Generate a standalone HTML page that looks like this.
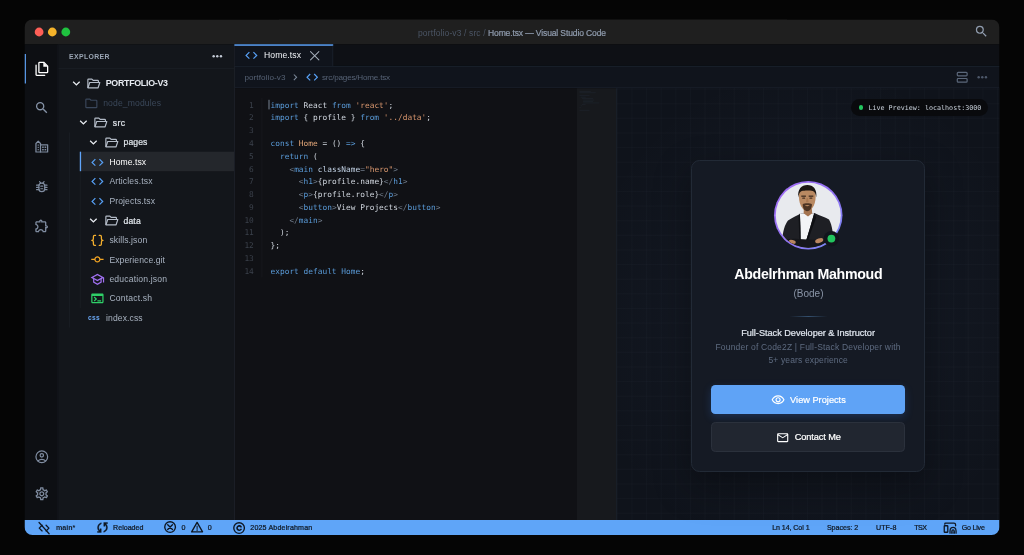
<!DOCTYPE html>
<html lang="en"><head><meta charset="utf-8"><title>Home.tsx — Visual Studio Code</title>
<style>

*{box-sizing:border-box;margin:0;padding:0}
html,body{width:1024px;height:555px;overflow:hidden;background:#050505}
body{position:relative;font-family:"Liberation Sans","DejaVu Sans",sans-serif;-webkit-font-smoothing:antialiased}
.win{position:absolute;left:0;top:0;width:1024px;height:555px;clip-path:inset(19.5px 24.5px 20px 24.5px round 8px);will-change:transform}
.b{position:absolute;display:block}
.t{position:absolute;white-space:nowrap;line-height:1;display:block}
.ic{position:absolute;display:block;fill:currentColor;overflow:visible}
.st{fill:none;stroke:currentColor;stroke-linecap:round;stroke-linejoin:round}
.code{position:absolute;left:270.5px;top:99.6px;font-family:"DejaVu Sans Mono","Liberation Mono",monospace;font-size:7.82px;line-height:12.79px;color:#d0d6de;white-space:pre;letter-spacing:.016px}
.code div{height:12.79px}
.ln{position:absolute;left:236px;top:99.6px;width:17.8px;text-align:right;font-family:"DejaVu Sans Mono","Liberation Mono",monospace;font-size:7.82px;line-height:12.79px;color:#3b414b}
.ln div{height:12.79px}
.k{color:#5a9bd8}.s{color:#d9976e}.f{color:#e2a678}.g{color:#6f7a88}.a{color:#c3d3e6}.w{color:#d0d6de}

</style></head>
<body>

<svg width="0" height="0" style="position:absolute"><defs>
<symbol id="i-code" viewBox="0 0 24 24"><path d="M9.4 16.6 4.8 12l4.600-4.600L8 6l-6 6 6 6 1.400-1.400zm5.200 0 4.600-4.600-4.600-4.600L16 6l6 6-6 6-1.400-1.400z"/></symbol>
<symbol id="i-files" viewBox="0 0 24 24"><g class="st" stroke-width="2" stroke-linejoin="round"><path d="M8.500 2H15l6 6v9a1 1 0 0 1-1 1H8.500a1 1 0 0 1-1-1V3a1 1 0 0 1 1-1z"/><path d="M3.200 6.500V21a1 1 0 0 0 1 1H16.500"/></g><path d="M14.300 2.300V8.700h6.400z"/></symbol>
<symbol id="i-search" viewBox="0 0 24 24"><path d="M15.500 14h-.79l-.28-.27A6.471 6.471 0 0 0 16 9.500 6.500 6.500 0 1 0 9.500 16c1.610 0 3.090-.59 4.230-1.570l.27.28v.79l5 4.990L20.490 19l-4.990-5zm-6 0C7.010 14 5 11.990 5 9.500S7.010 5 9.500 5 14 7.010 14 9.500 11.990 14 9.500 14z"/></symbol>
<symbol id="i-srcenv" viewBox="0 0 24 24"><g class="st" stroke-width="1.9"><path d="M3 20V7l3.500-3.500L10 7v2h11v11z"/><path d="M10 9v11"/></g><g><rect x="12.500" y="11.500" width="2.500" height="2.300"/><rect x="16.300" y="11.500" width="2.500" height="2.300"/><rect x="12.500" y="15.300" width="2.500" height="2.300"/><rect x="16.300" y="15.300" width="2.500" height="2.300"/><rect x="5.600" y="8.500" width="1.800" height="1.800"/><rect x="5.600" y="12" width="1.800" height="1.800"/><rect x="5.600" y="15.500" width="1.800" height="1.800"/></g></symbol>
<symbol id="i-bug" viewBox="0 0 24 24"><g class="st" stroke-width="1.9"><rect x="7.500" y="6.500" width="9" height="13" rx="4.500"/><path d="M4 9.500h3.500M4 13h3.500M4 16.500h3.500M16.500 9.500H20M16.500 13H20M16.500 16.500H20M8.500 4l1.800 2M15.500 4l-1.800 2M10.500 11h3M10.500 15h3"/></g></symbol>
<symbol id="i-ext" viewBox="0 0 24 24"><path d="M10.500 4.500c.28 0 .5.220.5.500v2h6v6h2c.28 0 .5.220.5.500s-.22.500-.5.500h-2v6h-2.120c-.68-1.750-2.390-3-4.380-3s-3.700 1.250-4.380 3H4v-2.120c1.750-.68 3-2.390 3-4.380 0-1.990-1.240-3.700-2.990-4.380L4 7h6V5c0-.28.220-.5.500-.5m0-2C9.120 2.500 8 3.620 8 5H4c-1.100 0-1.990.9-1.990 2v3.800h.29c1.490 0 2.700 1.210 2.700 2.700s-1.210 2.700-2.700 2.700H2V20c0 1.100.9 2 2 2h3.800v-.3c0-1.490 1.210-2.700 2.700-2.700s2.700 1.210 2.700 2.700v.3H17c1.100 0 2-.9 2-2v-4c1.380 0 2.500-1.120 2.500-2.500S20.380 11 19 11V7c0-1.100-.9-2-2-2h-4c0-1.380-1.120-2.500-2.500-2.500z"/></symbol>
<symbol id="i-account" viewBox="0 0 24 24"><g class="st" stroke-width="1.9"><circle cx="12" cy="12" r="9"/><circle cx="12" cy="9.800" r="2.600"/><path d="M6.200 18.200c1.500-1.500 3.500-2.300 5.800-2.300s4.300.8 5.800 2.300"/></g></symbol>
<symbol id="i-settings" viewBox="0 0 24 24"><path d="M19.430 12.980c.04-.32.070-.64.070-.98s-.03-.66-.07-.98l2.110-1.650c.19-.15.240-.42.120-.64l-2-3.460a.5.5 0 0 0-.61-.22l-2.490 1c-.52-.4-1.080-.73-1.690-.98l-.38-2.650A.488.488 0 0 0 14 2h-4c-.25 0-.46.180-.49.420l-.38 2.650c-.61.250-1.170.59-1.690.98l-2.490-1a.5.5 0 0 0-.61.220l-2 3.460c-.13.220-.07.490.12.640l2.110 1.650c-.04.32-.07.650-.07.980s.03.660.07.980l-2.110 1.650c-.19.150-.24.420-.12.640l2 3.460c.12.220.39.300.61.220l2.490-1c.52.400 1.080.73 1.690.98l.38 2.650c.3.240.24.420.49.420h4c.25 0 .46-.18.490-.42l.38-2.650c.61-.25 1.170-.59 1.690-.98l2.490 1c.23.090.49 0 .61-.22l2-3.460c.12-.22.070-.49-.12-.64l-2.110-1.650zM17.450 11.270c.04.310.05.520.05.730s-.02.430-.05.730l-.14 1.130.89.700 1.080.84-.7 1.210-1.270-.51-1.040-.42-.9.680c-.43.320-.84.560-1.250.73l-1.060.43-.16 1.130-.2 1.350h-1.400l-.19-1.350-.16-1.130-1.060-.43c-.43-.18-.83-.41-1.230-.71l-.91-.7-1.060.43-1.270.51-.7-1.210 1.080-.84.890-.7-.14-1.130c-.03-.31-.05-.54-.05-.74s.02-.43.050-.73l.14-1.130-.89-.7-1.080-.84.7-1.210 1.270.51 1.040.42.900-.68c.43-.32.840-.56 1.250-.73l1.060-.43.160-1.130.2-1.350h1.390l.19 1.350.16 1.130 1.060.43c.43.180.83.410 1.230.71l.91.700 1.060-.43 1.270-.51.700 1.210-1.070.85-.89.700.14 1.130zM12 8c-2.210 0-4 1.790-4 4s1.790 4 4 4 4-1.790 4-4-1.790-4-4-4zm0 6c-1.100 0-2-.9-2-2s.9-2 2-2 2 .9 2 2-.9 2-2 2z"/></symbol>
<symbol id="i-more" viewBox="0 0 24 24"><circle cx="6" cy="12" r="2"/><circle cx="12" cy="12" r="2"/><circle cx="18" cy="12" r="2"/></symbol>
<symbol id="i-down" viewBox="0 0 24 24"><path d="M16.590 8.590 12 13.170 7.410 8.590 6 10l6 6 6-6z"/></symbol>
<symbol id="i-right" viewBox="0 0 24 24"><path d="M10 6 8.590 7.410 13.170 12l-4.580 4.590L10 18l6-6z"/></symbol>
<symbol id="i-fopen" viewBox="0 0 24 24"><g class="st" stroke-width="1.9"><path d="M3 18.500V6.200c0-.7.500-1.200 1.200-1.200h5.300l2 2h7.300c.7 0 1.200.5 1.200 1.200V10"/><path d="M3.200 19 6 10.500h16.300L19.500 19z"/></g></symbol>
<symbol id="i-folder" viewBox="0 0 24 24"><path class="st" stroke-width="1.9" d="M3 6.200C3 5.500 3.500 5 4.200 5h5.300l2 2h8.300c.7 0 1.200.5 1.200 1.200v9.600c0 .7-.5 1.200-1.200 1.200H4.200C3.500 19 3 18.500 3 17.800z"/></symbol>
<symbol id="i-braces" viewBox="0 0 24 24"><g class="st" stroke-width="2.100" stroke-linecap="butt"><path d="M9 4H7.500C6.100 4 5.500 4.800 5.500 6v3.500C5.500 10.800 4.800 12 3 12c1.800 0 2.500 1.200 2.500 2.500V18c0 1.200.6 2 2 2H9"/><path d="M15 4h1.500c1.400 0 2 .8 2 2v3.500c0 1.300.7 2.500 2.500 2.500-1.800 0-2.500 1.200-2.500 2.500V18c0 1.200-.6 2-2 2H15"/></g></symbol>
<symbol id="i-commit" viewBox="0 0 24 24"><path d="M16.900 11c-.46-2.280-2.480-4-4.900-4s-4.440 1.720-4.900 4H2v2h5.100c.46 2.280 2.480 4 4.900 4s4.440-1.720 4.900-4H22v-2h-5.100zM12 15c-1.660 0-3-1.340-3-3s1.340-3 3-3 3 1.340 3 3-1.340 3-3 3z"/></symbol>
<symbol id="i-school" viewBox="0 0 24 24"><path d="M12 3 1 9l4 2.180v6L12 21l7-3.820v-6l2-1.090V17h2V9L12 3zm6.820 6L12 12.720 5.180 9 12 5.280 18.820 9zM17 15.990l-5 2.730-5-2.730v-3.720L12 15l5-2.730v3.720z"/></symbol>
<symbol id="i-term" viewBox="0 0 24 24"><path d="M20 4H4c-1.110 0-2 .9-2 2v12c0 1.100.89 2 2 2h16c1.100 0 2-.9 2-2V6c0-1.100-.89-2-2-2zm0 14H4V8h16v10zm-2-1h-6v-2h6v2zM7.500 17l-1.410-1.410L8.670 13l-2.590-2.590L7.500 9l4 4-4 4z"/></symbol>
<symbol id="i-close" viewBox="0 0 24 24"><path class="st" stroke-width="1.600" stroke-linecap="butt" d="M5.500 5.500l13 13M18.500 5.500l-13 13"/></symbol>
<symbol id="i-split" viewBox="0 0 24 24"><g class="st" stroke-width="2"><rect x="3.800" y="3.800" width="16.400" height="6" rx="1.500"/><rect x="3.800" y="14.200" width="16.400" height="6" rx="1.500"/></g></symbol>
<symbol id="i-eye" viewBox="0 0 24 24"><path d="M12 6c3.790 0 7.170 2.130 8.820 5.500C19.170 14.870 15.790 17 12 17s-7.170-2.130-8.820-5.500C4.830 8.130 8.210 6 12 6m0-2C7 4 2.730 7.110 1 11.500 2.730 15.890 7 19 12 19s9.270-3.110 11-7.500C21.270 7.110 17 4 12 4zm0 5c1.380 0 2.500 1.120 2.500 2.500S13.380 14 12 14s-2.500-1.120-2.500-2.500S10.620 9 12 9m0-2c-2.480 0-4.500 2.020-4.500 4.500S9.520 16 12 16s4.500-2.020 4.500-4.500S14.480 7 12 7z"/></symbol>
<symbol id="i-mail" viewBox="0 0 24 24"><path d="M22 6c0-1.100-.9-2-2-2H4c-1.100 0-2 .9-2 2v12c0 1.100.9 2 2 2h16c1.100 0 2-.9 2-2V6zm-2 0-8 5-8-5h16zm0 12H4V8l8 5 8-5v10z"/></symbol>
<symbol id="i-codeoff" viewBox="0 0 24 24"><g class="st" stroke-width="2.200" stroke-linecap="butt" stroke-linejoin="miter"><path d="M8.600 7.200 3.800 12l4.800 4.800"/><path d="M15.400 7.200l4.800 4.800-4.800 4.800"/><path d="M3.500 2.500l17 19"/></g></symbol>
<symbol id="i-sync" viewBox="0 -960 960 960"><path stroke="currentColor" stroke-width="22" d="M160-160v-80h110l-16-14q-52-46-73-105t-21-119q0-111 66.500-197.500T400-790v84q-72 26-116 88.500T240-478q0 45 17 87.500t53 78.500l10 10v-98h80v240H160Zm400-10v-84q72-26 116-88.500T720-482q0-45-17-87.500T650-648l-10-10v98h-80v-240h240v80H690l16 14q49 49 71.500 106.500T800-482q0 111-66.500 197.500T560-170Z"/></symbol>
<symbol id="i-cancel" viewBox="0 0 24 24"><g class="st" stroke-width="2.300" stroke-linecap="butt"><circle cx="12" cy="12" r="9"/><path d="M8 8l8 8M16 8l-8 8"/></g></symbol>
<symbol id="i-warn" viewBox="0 0 24 24"><g class="st" stroke-width="2.300" stroke-linecap="butt" stroke-linejoin="miter"><path d="M12 4 2.800 20h18.400z"/><path stroke-width="1.700" d="M12 10v4.300M12 16v1.800"/></g></symbol>
<symbol id="i-copy" viewBox="0 0 24 24"><g class="st" stroke-width="2.300" stroke-linecap="butt"><circle cx="12" cy="12" r="9"/><path stroke-width="2.700" d="M15.200 9.800a3.700 3.700 0 1 0 0 4.400"/></g></symbol>
<symbol id="i-live" viewBox="0 0 24 24"><g class="st" stroke-width="2.200" stroke-linecap="butt"><path d="M3 5.400V5c0-.8.500-1.300 1.300-1.300h14.200c1.700 0 2.800 1 2.800 2.700V8.200"/><rect x="2.100" y="8" width="6" height="11" rx="1"/><path d="M11.900 20.600v-3.600a5.100 6.300 0 0 1 10.200 0v3.600"/><path d="M14.900 20.600v-2.600a2.100 3 0 0 1 4.200 0v2.600"/></g><rect x="16.200" y="17.500" width="1.600" height="4" /></symbol>
</defs></svg>
<div class="win">
<svg class="b" style="left:0;top:0" width="1024" height="555" viewBox="0 0 1024 555"><rect x="24.5" y="19.5" width="975.00" height="24.90" fill="#1f1f1f"/><rect x="24.5" y="44.4" width="34.00" height="475.60" fill="#0d0f13"/><rect x="57.7" y="44.4" width="0.80" height="475.60" fill="#191d25"/><rect x="58.5" y="44.4" width="176.40" height="475.60" fill="#13161b"/><rect x="234.1" y="44.4" width="0.80" height="475.60" fill="#21262f"/><rect x="234.9" y="44.4" width="764.60" height="21.50" fill="#0e1015"/><rect x="234.9" y="65.9" width="764.60" height="22.40" fill="#10141c"/><rect x="234.9" y="65.9" width="764.60" height="0.80" fill="#1c232e"/><rect x="234.9" y="87.5" width="764.60" height="0.80" fill="#1c232e"/><rect x="234.9" y="88.3" width="342.10" height="431.70" fill="#101115"/><rect x="577" y="88.3" width="39.30" height="431.70" fill="#17191d"/><rect x="616.2" y="88.3" width="1.00" height="431.70" fill="#1d2530"/><rect x="24.5" y="520" width="975.00" height="15.00" fill="#5fa5f8"/><circle cx="39.1" cy="32" r="4.400" fill="#fe5f57"/><circle cx="52.3" cy="32" r="4.400" fill="#f5b32a"/><circle cx="65.8" cy="32" r="4.400" fill="#1fc23f"/><rect x="24.5" y="54" width="1.40" height="29.50" fill="#60a5fa"/><rect x="58.5" y="68" width="175.40" height="0.70" fill="rgba(148,163,184,.07)"/><rect x="69" y="132.5" width="0.70" height="195.00" fill="rgba(148,163,184,.07)"/><rect x="79.8" y="152" width="0.70" height="156.00" fill="rgba(148,163,184,.07)"/><rect x="79.8" y="151.7" width="154.30" height="19.50" fill="#24272c"/><rect x="79.8" y="151.7" width="1.30" height="19.50" fill="#60a5fa"/><rect x="234.9" y="44.4" width="98.30" height="21.50" fill="#10141c"/><rect x="234.4" y="44.3" width="98.80" height="1.50" fill="#5b9ff2"/><rect x="332.4" y="45.8" width="0.80" height="20.10" fill="#1c232e"/><rect x="261.6" y="98" width="0.70" height="179.50" fill="rgba(148,163,184,.07)"/><rect x="268.4" y="99.8" width="1.20" height="9.60" fill="#66717f"/><rect x="579.5" y="91" width="11.25" height="0.70" fill="#1d232c"/><rect x="579.5" y="92.45" width="16.25" height="0.70" fill="#1d232c"/><rect x="579.5" y="95.35" width="10.00" height="0.70" fill="#1d232c"/><rect x="580.7" y="96.8" width="5.00" height="0.70" fill="#1d232c"/><rect x="581.9" y="98.25" width="11.25" height="0.70" fill="#1d232c"/><rect x="583.1" y="99.7" width="11.25" height="0.70" fill="#1d232c"/><rect x="583.1" y="101.15" width="10.00" height="0.70" fill="#1d232c"/><rect x="583.1" y="102.6" width="16.25" height="0.70" fill="#1d232c"/><rect x="581.9" y="104.05" width="3.75" height="0.70" fill="#1d232c"/><rect x="580.7" y="105.5" width="1.25" height="0.70" fill="#1d232c"/><rect x="579.5" y="106.95" width="1.25" height="0.70" fill="#1d232c"/><rect x="579.5" y="109.85" width="10.00" height="0.70" fill="#1d232c"/></svg>
<i class="b" style="left:617px;top:88.3px;width:382.50px;height:431.70px;background:#0f131b;background-image:linear-gradient(rgba(148,163,184,.028) 1px,transparent 1px),linear-gradient(90deg,rgba(148,163,184,.028) 1px,transparent 1px);background-size:14.63px 14.63px;background-position:-.2px .6px"></i>
<svg class="ic" style="left:974.30px;top:24.10px;width:14.8px;height:14.8px;color:#8f9bad;"><use href="#i-search"/></svg>

<svg class="ic" style="left:33.80px;top:61.10px;width:15.6px;height:15.6px;color:#ffffff;"><use href="#i-files"/></svg>
<svg class="ic" style="left:34.00px;top:100.40px;width:15.6px;height:15.6px;color:#8592a6;"><use href="#i-search"/></svg>
<svg class="ic" style="left:34.00px;top:139.10px;width:15.6px;height:15.6px;color:#7f8ca0;"><use href="#i-srcenv"/></svg>
<svg class="ic" style="left:34.30px;top:178.70px;width:15.6px;height:15.6px;color:#7f8ca0;"><use href="#i-bug"/></svg>
<svg class="ic" style="left:34.30px;top:218.20px;width:15.6px;height:15.6px;color:#7f8ca0;"><use href="#i-ext"/></svg>
<svg class="ic" style="left:34.00px;top:449.20px;width:15.6px;height:15.6px;color:#7f8ca0;"><use href="#i-account"/></svg>
<svg class="ic" style="left:34.10px;top:485.50px;width:15.6px;height:15.6px;color:#7f8ca0;"><use href="#i-settings"/></svg>

<svg class="ic" style="left:209.80px;top:49.10px;width:14.6px;height:14.6px;color:#c3cad5;"><use href="#i-more"/></svg>


<svg class="ic" style="left:68.80px;top:75.90px;width:14.8px;height:14.8px;color:#e8ecf1;"><use href="#i-down"/></svg>
<svg class="ic" style="left:85.95px;top:75.85px;width:14.9px;height:14.9px;color:#b4bcc8;"><use href="#i-fopen"/></svg>
<svg class="ic" style="left:83.65px;top:95.75px;width:14.7px;height:14.7px;color:#3a475b;"><use href="#i-folder"/></svg>
<svg class="ic" style="left:76.20px;top:115.20px;width:14.8px;height:14.8px;color:#e8ecf1;"><use href="#i-down"/></svg>
<svg class="ic" style="left:93.35px;top:115.05px;width:14.9px;height:14.9px;color:#b4bcc8;"><use href="#i-fopen"/></svg>
<svg class="ic" style="left:86.40px;top:134.90px;width:14.8px;height:14.8px;color:#e8ecf1;"><use href="#i-down"/></svg>
<svg class="ic" style="left:103.95px;top:134.75px;width:14.9px;height:14.9px;color:#b4bcc8;"><use href="#i-fopen"/></svg>
<svg class="ic" style="left:89.50px;top:154.50px;width:14.8px;height:14.8px;color:#57a0f5;"><use href="#i-code"/></svg>
<svg class="ic" style="left:89.50px;top:174.00px;width:14.8px;height:14.8px;color:#57a0f5;"><use href="#i-code"/></svg>
<svg class="ic" style="left:89.50px;top:193.60px;width:14.8px;height:14.8px;color:#57a0f5;"><use href="#i-code"/></svg>
<svg class="ic" style="left:86.40px;top:213.10px;width:14.8px;height:14.8px;color:#e8ecf1;"><use href="#i-down"/></svg>
<svg class="ic" style="left:103.95px;top:212.95px;width:14.9px;height:14.9px;color:#b4bcc8;"><use href="#i-fopen"/></svg>
<svg class="ic" style="left:89.50px;top:232.50px;width:14.8px;height:14.8px;color:#f5b02e;"><use href="#i-braces"/></svg>
<svg class="ic" style="left:89.50px;top:252.10px;width:14.8px;height:14.8px;color:#f5a623;"><use href="#i-commit"/></svg>
<svg class="ic" style="left:89.80px;top:271.60px;width:14.8px;height:14.8px;color:#a070f0;"><use href="#i-school"/></svg>
<svg class="ic" style="left:89.50px;top:291.00px;width:14.8px;height:14.8px;color:#2fcf68;"><use href="#i-term"/></svg>
<svg class="ic" style="left:244.40px;top:48.00px;width:14.8px;height:14.8px;color:#57a0f5;"><use href="#i-code"/></svg>
<svg class="ic" style="left:306.80px;top:47.70px;width:15.4px;height:15.4px;color:#a3acb8;"><use href="#i-close"/></svg>
<svg class="ic" style="left:288.95px;top:71.05px;width:12.5px;height:12.5px;color:#7d8a9c;"><use href="#i-right"/></svg>
<svg class="ic" style="left:305.00px;top:70.10px;width:14.4px;height:14.4px;color:#57a0f5;"><use href="#i-code"/></svg>
<svg class="ic" style="left:955.20px;top:70.10px;width:14.4px;height:14.4px;color:#5b677a;"><use href="#i-split"/></svg>
<svg class="ic" style="left:974.70px;top:69.90px;width:14.6px;height:14.6px;color:#4d586a;"><use href="#i-more"/></svg>


<div class="ln"><div>1</div><div>2</div><div>3</div><div>4</div><div>5</div><div>6</div><div>7</div><div>8</div><div>9</div><div>10</div><div>11</div><div>12</div><div>13</div><div>14</div></div>
<div class="code"><div><span class="k">import</span> React <span class="k">from</span> <span class="s">'react'</span>;</div><div><span class="k">import</span> { profile } <span class="k">from</span> <span class="s">'../data'</span>;</div><div></div><div><span class="k">const</span> <span class="f">Home</span> = () <span class="k">=&gt;</span> {</div><div>  <span class="k">return</span> (</div><div>    <span class="g">&lt;</span><span class="k">main</span> <span class="a">className</span><span class="g">=</span><span class="s">"hero"</span><span class="g">&gt;</span></div><div>      <span class="g">&lt;</span><span class="k">h1</span><span class="g">&gt;</span>{profile.name}<span class="g">&lt;/</span><span class="k">h1</span><span class="g">&gt;</span></div><div>      <span class="g">&lt;</span><span class="k">p</span><span class="g">&gt;</span>{profile.role}<span class="g">&lt;/</span><span class="k">p</span><span class="g">&gt;</span></div><div>      <span class="g">&lt;</span><span class="k">button</span><span class="g">&gt;</span>View Projects<span class="g">&lt;/</span><span class="k">button</span><span class="g">&gt;</span></div><div>    <span class="g">&lt;/</span><span class="k">main</span><span class="g">&gt;</span></div><div>  );</div><div>};</div><div></div><div><span class="k">export default</span> <span class="k">Home</span>;</div></div>

<i class="b" style="left:617.5px;top:88.3px;width:382.00px;height:431.70px;background:radial-gradient(ellipse 230px 250px at 191px 228px,rgba(120,150,210,.07),rgba(120,150,210,.03) 55%,transparent 100%);"></i>
<i class="b" style="left:851.3px;top:99.1px;width:136.8px;height:16.7px;border-radius:9px;background:#090a0d"></i>
<i class="b" style="left:858.5px;top:105.2px;width:4.6px;height:4.6px;border-radius:50%;background:#22c55e"></i>
<i class="b" style="left:691px;top:160px;width:234.4px;height:312.4px;border-radius:8.5px;background:#151a24;border:1px solid #222a36;box-shadow:0 14px 36px rgba(0,0,0,.35)"></i>

<svg class="b" style="left:773.9px;top:180.5px;width:68.5px;height:68.5px;overflow:visible" viewBox="0 0 68.500 68.500">
<defs><linearGradient id="ring" x1="0" y1="0" x2="1" y2="1"><stop offset="0" stop-color="#a56cf5"/><stop offset=".6" stop-color="#8f74f3"/><stop offset="1" stop-color="#6f8df5"/></linearGradient>
<clipPath id="avc"><circle cx="34.250" cy="34.250" r="32.500"/></clipPath></defs>
<circle cx="34.250" cy="34.250" r="34.250" fill="url(#ring)"/>
<g clip-path="url(#avc)">
<rect width="68.500" height="68.500" fill="#e8eaee"/>
<path d="M7 70 C8 56 9.500 45 14 39.500 C18 36.500 24 34.500 27.500 32 L40.500 32 C45 34.500 51 36 55 38.500 C58.500 44 59.500 55 60 70Z" fill="#1e1f24"/>
<path d="M25.900 32.200 L40.200 32.200 L36.500 45 L31.200 63 L26.600 63 L26.200 45Z" fill="#f3f4f6"/>
<path d="M25.900 32.200 L24.600 36 L25.600 63 L26.800 63 L26.500 45Z" fill="#0f1014"/><path d="M40.200 32.200 L42.200 36.500 L32.600 63 L31 63 L36.600 45Z" fill="#0f1014"/>
<path d="M30 25 L37.600 25 L38.200 32.200 L34 35.500 L29.600 32.200Z" fill="#a57450"/>
<path d="M24.900 15 C24.900 8 28.500 5.500 33.300 5.500 C38.200 5.500 41.700 8 41.700 15 C41.700 20 40.500 24.500 38 27.500 C36.500 29.300 35 30.200 33.300 30.200 C31.600 30.200 30.100 29.300 28.600 27.500 C26.100 24.500 24.900 20 24.900 15Z" fill="#b98962"/>
<path d="M24.300 16.500 C23.300 8 27.500 3.900 33.300 3.900 C39.200 3.900 43.300 8 42.300 16.500 C41.800 12.500 40.600 10.600 38.800 10 C36 9.200 30.500 9.200 27.800 10 C26 10.600 24.800 12.500 24.300 16.500Z" fill="#1c1613"/>
<path d="M28.700 23.300 C30.300 22 36.300 22 37.900 23.300 C38 26.500 36.500 30.300 33.300 30.300 C30.100 30.300 28.600 26.500 28.700 23.300Z M30.800 24.500 C32 25.500 34.600 25.500 35.800 24.500 C34.800 23.700 31.800 23.700 30.800 24.500Z" fill="#3a2619" fill-rule="evenodd" opacity=".85"/>
<rect x="27.300" y="14.600" width="4.600" height="1.100" fill="#2a1c14"/><rect x="34.700" y="14.600" width="4.600" height="1.100" fill="#2a1c14"/>
<rect x="28.200" y="16.600" width="3" height="1.200" rx=".6" fill="#4a3324"/><rect x="35.400" y="16.600" width="3" height="1.200" rx=".6" fill="#4a3324"/>
<path d="M32.600 17 L32 21.200 L34.600 21.200 L34 17Z" fill="#a87852"/>
<path d="M10 59 C22 55.500 34 60.500 47 58 L54 61 L54 70 L10 70Z" fill="#15161a"/>
<ellipse cx="45.200" cy="59.600" rx="4.200" ry="2.200" fill="#b98560" transform="rotate(-20 45.200 59.600)"/>
<ellipse cx="18.300" cy="60.800" rx="3.500" ry="1.800" fill="#b98560" transform="rotate(14 18.300 60.800)"/>
</g>
<circle cx="57.400" cy="57.600" r="7.700" fill="#12151c"/><circle cx="57.400" cy="57.600" r="3.900" fill="#22c55e"/>
</svg>

<i class="b" style="left:785.7px;top:316.1px;width:45.5px;height:.8px;background:linear-gradient(90deg,transparent 8%,#34506f 50%,transparent 92%)"></i>
<i class="b" style="left:711.1px;top:384.9px;width:194.3px;height:29.4px;border-radius:4.3px;background:#5fa3f6;box-shadow:0 3px 8px rgba(59,130,246,.22)"></i>
<svg class="ic" style="left:770.60px;top:392.60px;width:14.2px;height:14.2px;color:#ffffff;"><use href="#i-eye"/></svg>
<i class="b" style="left:711.1px;top:422.2px;width:194.3px;height:30px;border-radius:4.3px;background:#212630;border:1px solid #2b313c"></i>
<svg class="ic" style="left:775.60px;top:430.50px;width:13.4px;height:13.4px;color:#ffffff;"><use href="#i-mail"/></svg>
<svg class="ic" style="left:37.10px;top:520.80px;width:14.2px;height:14.2px;color:#0f1722;"><use href="#i-codeoff"/></svg>
<svg class="ic" style="left:94.60px;top:519.90px;width:15px;height:15px;color:#0f1722;"><use href="#i-sync"/></svg>
<svg class="ic" style="left:163.40px;top:520.40px;width:14.2px;height:14.2px;color:#0f1722;"><use href="#i-cancel"/></svg>
<svg class="ic" style="left:189.50px;top:520.20px;width:14.2px;height:14.2px;color:#0f1722;"><use href="#i-warn"/></svg>
<svg class="ic" style="left:231.80px;top:520.50px;width:14.2px;height:14.2px;color:#0f1722;"><use href="#i-copy"/></svg>
<svg class="ic" style="left:943.00px;top:520.70px;width:14.2px;height:14.2px;color:#0f1722;"><use href="#i-live"/></svg>
<span class="t" style="left:68.90px;top:54.31px;font-size:6.9px;font-weight:700;color:#9aa5b4;letter-spacing:0.399px;">EXPLORER</span>
<span class="t" style="left:105.70px;top:79.37px;font-size:8.9px;font-weight:700;color:#e6eaf0;letter-spacing:-0.299px;">PORTFOLIO-V3</span>
<span class="t" style="left:103.20px;top:99.13px;font-size:8.6px;font-weight:400;color:#3a4759;letter-spacing:0.128px;">node_modules</span>
<span class="t" style="left:112.80px;top:118.63px;font-size:8.6px;font-weight:500;color:#dfe4ea;letter-spacing:0.366px;-webkit-text-stroke:.22px currentColor;">src</span>
<span class="t" style="left:123.50px;top:138.33px;font-size:8.6px;font-weight:500;color:#dfe4ea;letter-spacing:0.120px;-webkit-text-stroke:.22px currentColor;">pages</span>
<span class="t" style="left:109.40px;top:157.93px;font-size:8.6px;font-weight:400;color:#ffffff;letter-spacing:0.058px;">Home.tsx</span>
<span class="t" style="left:109.40px;top:177.43px;font-size:8.6px;font-weight:400;color:#a9b3c1;letter-spacing:0.141px;">Articles.tsx</span>
<span class="t" style="left:109.40px;top:197.03px;font-size:8.6px;font-weight:400;color:#a9b3c1;letter-spacing:0.107px;">Projects.tsx</span>
<span class="t" style="left:123.50px;top:216.53px;font-size:8.6px;font-weight:500;color:#dfe4ea;letter-spacing:0.155px;-webkit-text-stroke:.22px currentColor;">data</span>
<span class="t" style="left:109.40px;top:235.93px;font-size:8.6px;font-weight:400;color:#a9b3c1;letter-spacing:0.102px;">skills.json</span>
<span class="t" style="left:109.40px;top:255.53px;font-size:8.6px;font-weight:400;color:#a9b3c1;letter-spacing:0.087px;">Experience.git</span>
<span class="t" style="left:109.40px;top:275.03px;font-size:8.6px;font-weight:400;color:#a9b3c1;letter-spacing:0.166px;">education.json</span>
<span class="t" style="left:109.40px;top:294.43px;font-size:8.6px;font-weight:400;color:#a9b3c1;letter-spacing:0.178px;">Contact.sh</span>
<span class="t" style="left:88.00px;top:314.97px;font-size:6.6px;font-weight:700;color:#6aa8f5;letter-spacing:0.392px;">css</span>
<span class="t" style="left:106.00px;top:313.93px;font-size:8.6px;font-weight:400;color:#a9b3c1;letter-spacing:0.096px;">index.css</span>
<span class="t" style="left:418.00px;top:29.48px;font-size:8.5px;font-weight:400;color:#4b5565;letter-spacing:0.127px;">portfolio-v3 / src /</span>
<span class="t" style="left:488.00px;top:29.48px;font-size:8.5px;font-weight:500;color:#8f9bad;letter-spacing:-0.117px;-webkit-text-stroke:.22px currentColor;">Home.tsx — Visual Studio Code</span>
<span class="t" style="left:264.00px;top:51.43px;font-size:8.6px;font-weight:400;color:#f1f4f8;letter-spacing:0.100px;">Home.tsx</span>
<span class="t" style="left:244.40px;top:73.59px;font-size:8.1px;font-weight:400;color:#566275;letter-spacing:0.087px;">portfolio-v3</span>
<span class="t" style="left:322.00px;top:73.59px;font-size:8.1px;font-weight:400;color:#566275;letter-spacing:-0.202px;">src/pages/Home.tsx</span>
<span class="t" style="left:868.40px;top:104.52px;font-size:6.7px;font-weight:400;color:#cdd5df;letter-spacing:0.010px;font-family:'DejaVu Sans Mono','Liberation Mono',monospace;">Live Preview: localhost:3000</span>
<span class="t" style="left:734.30px;top:267.32px;font-size:14.2px;font-weight:700;color:#ffffff;letter-spacing:-0.318px;">Abdelrhman Mahmoud</span>
<span class="t" style="left:793.40px;top:288.70px;font-size:10px;font-weight:400;color:#8a95a7;letter-spacing:0.017px;">(Bode)</span>
<span class="t" style="left:741.20px;top:328.62px;font-size:9.2px;font-weight:500;color:#dfe5ee;letter-spacing:-0.032px;-webkit-text-stroke:.22px currentColor;">Full-Stack Developer &amp; Instructor</span>
<span class="t" style="left:715.50px;top:343.28px;font-size:8.5px;font-weight:400;color:#5e6b80;letter-spacing:0.181px;">Founder of Code2Z | Full-Stack Developer with</span>
<span class="t" style="left:768.50px;top:355.68px;font-size:8.5px;font-weight:400;color:#5e6b80;letter-spacing:0.139px;">5+ years experience</span>
<span class="t" style="left:790.10px;top:395.52px;font-size:9.2px;font-weight:500;color:#ffffff;letter-spacing:0.017px;-webkit-text-stroke:.22px currentColor;">View Projects</span>
<span class="t" style="left:794.70px;top:432.92px;font-size:9.2px;font-weight:500;color:#ffffff;letter-spacing:-0.087px;-webkit-text-stroke:.22px currentColor;">Contact Me</span>
<span class="t" style="left:55.90px;top:525.21px;font-size:7.1px;font-weight:700;color:#0f1722;letter-spacing:0.018px;">main*</span>
<span class="t" style="left:113.10px;top:525.21px;font-size:7.1px;font-weight:500;color:#0f1722;letter-spacing:-0.011px;-webkit-text-stroke:.22px currentColor;">Reloaded</span>
<span class="t" style="left:181.60px;top:525.21px;font-size:7.1px;font-weight:500;color:#0f1722;letter-spacing:0.000px;-webkit-text-stroke:.22px currentColor;">0</span>
<span class="t" style="left:207.80px;top:525.21px;font-size:7.1px;font-weight:500;color:#0f1722;letter-spacing:0.000px;-webkit-text-stroke:.22px currentColor;">0</span>
<span class="t" style="left:250.30px;top:525.21px;font-size:7.1px;font-weight:500;color:#0f1722;letter-spacing:0.156px;-webkit-text-stroke:.22px currentColor;">2025 Abdelrahman</span>
<span class="t" style="left:772.20px;top:525.31px;font-size:7.1px;font-weight:500;color:#0f1722;letter-spacing:-0.079px;-webkit-text-stroke:.22px currentColor;">Ln 14, Col 1</span>
<span class="t" style="left:826.90px;top:525.31px;font-size:7.1px;font-weight:500;color:#0f1722;letter-spacing:-0.020px;-webkit-text-stroke:.22px currentColor;">Spaces: 2</span>
<span class="t" style="left:875.90px;top:525.31px;font-size:7.1px;font-weight:500;color:#0f1722;letter-spacing:0.123px;-webkit-text-stroke:.22px currentColor;">UTF-8</span>
<span class="t" style="left:914.30px;top:525.31px;font-size:7.1px;font-weight:500;color:#0f1722;letter-spacing:-0.598px;-webkit-text-stroke:.22px currentColor;">TSX</span>
<span class="t" style="left:961.70px;top:525.31px;font-size:7.1px;font-weight:500;color:#0f1722;letter-spacing:-0.209px;-webkit-text-stroke:.22px currentColor;">Go Live</span>
</div>
</body></html>
